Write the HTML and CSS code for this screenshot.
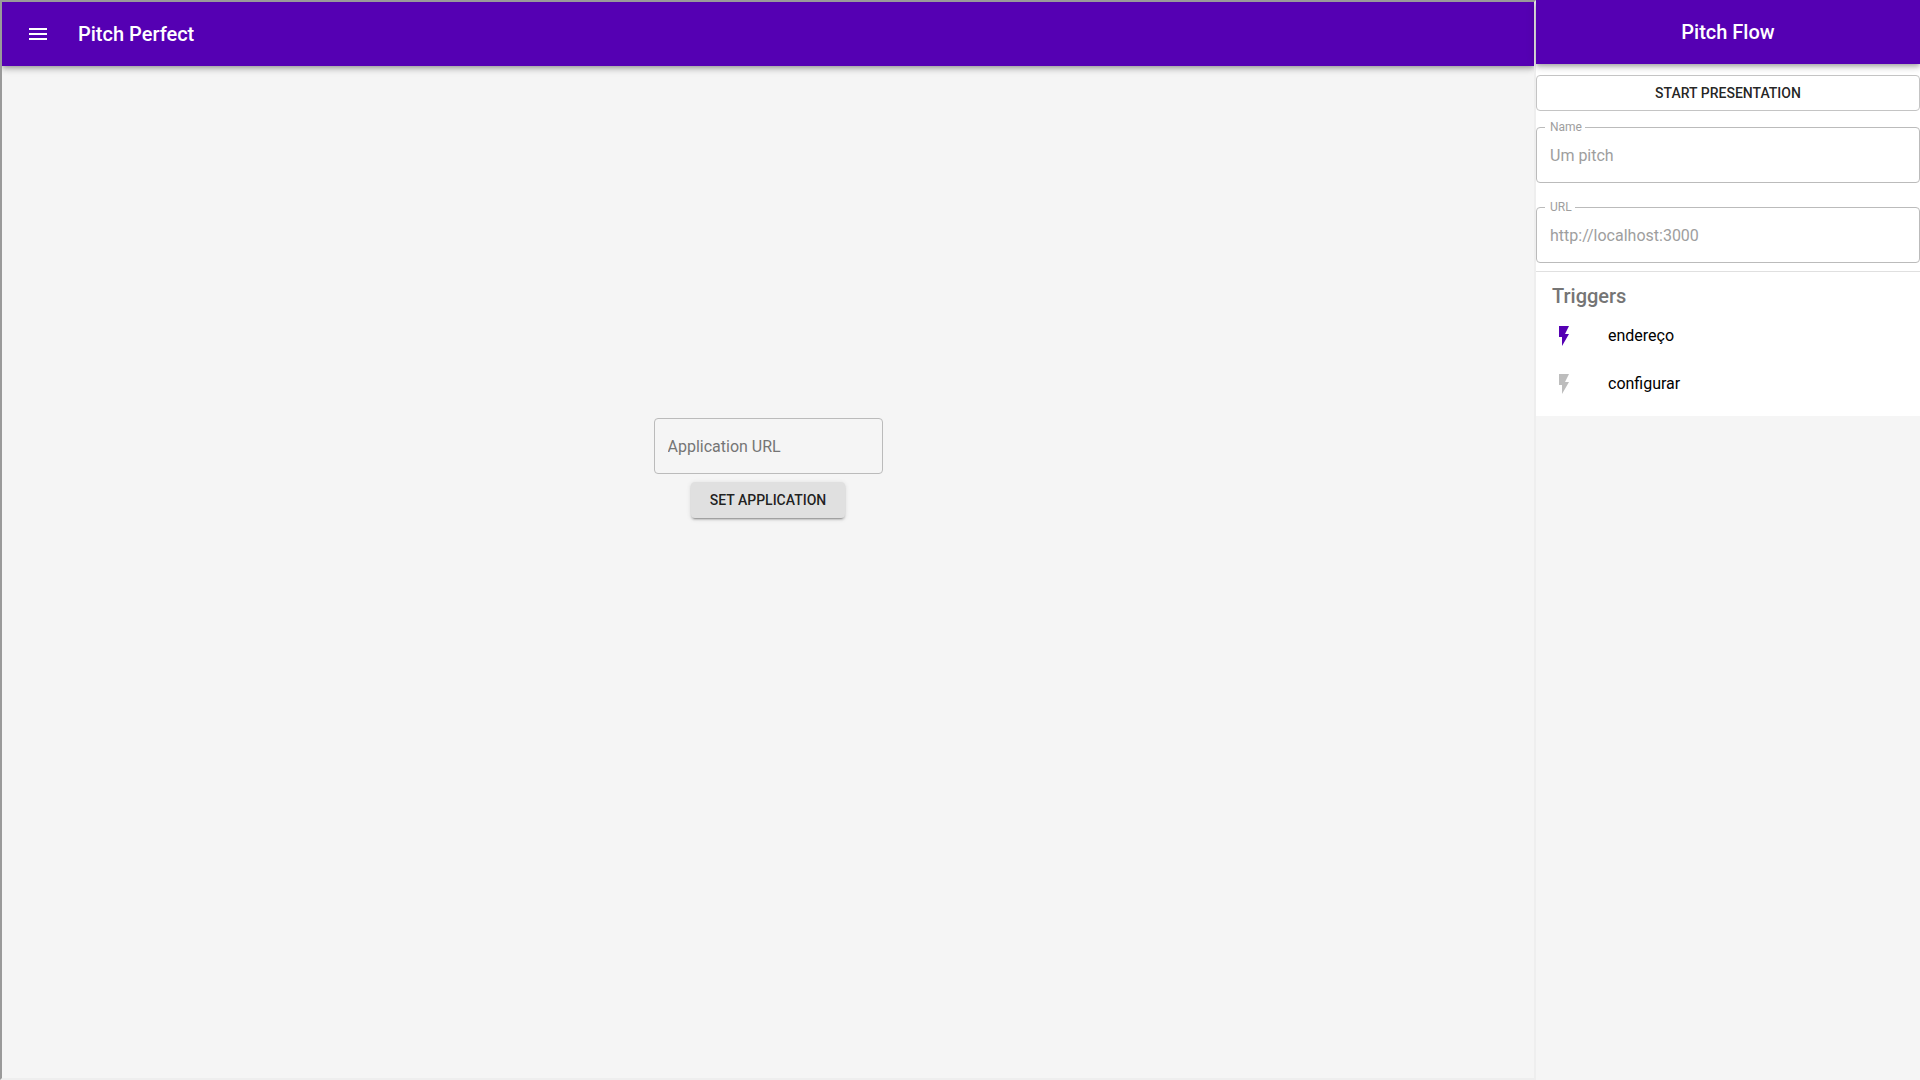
FILE: index.html
```html
<!DOCTYPE html>
<html lang="en">
<head>
  <meta charset="UTF-8" />
  <meta name="viewport" content="width=device-width, initial-scale=1.0"/>
  <title>Pitch Perfect</title>
  <link rel="stylesheet" href="styles.css">
</head>
<body>

  <main class="stage">
    <header class="app-bar">
      <button class="menu-btn" type="button" aria-label="Open menu">
        <svg viewBox="0 0 24 24" width="24" height="24"><path d="M3 18h18v-2H3v2zm0-5h18v-2H3v2zm0-7v2h18V6H3z"/></svg>
      </button>
      <h1>Pitch Perfect</h1>
    </header>

    <form class="app-form">
      <input class="text-input" type="text" placeholder="Application URL" aria-label="Application URL">
      <button class="btn btn-contained" type="button">Set Application</button>
    </form>
  </main>

  <aside class="sidebar">
    <header class="app-bar app-bar-center">
      <h2>Pitch Flow</h2>
    </header>

    <div class="panel">
      <div class="flow-form">
        <button class="btn btn-outlined" type="button">Start Presentation</button>
        <div class="field">
          <label for="pitchName">Name</label>
          <input class="text-input" id="pitchName" type="text" value="Um pitch" disabled>
        </div>
        <div class="field">
          <label for="pitchUrl">URL</label>
          <input class="text-input" id="pitchUrl" type="text" value="http://localhost:3000" disabled>
        </div>
      </div>

      <section class="triggers">
        <h3>Triggers</h3>
        <ul>
          <li>
            <svg class="bolt active" viewBox="0 0 24 24" width="24" height="24"><path d="M7 2v11h3v9l7-12h-4l4-8z"/></svg>
            <span>endereço</span>
          </li>
          <li>
            <svg class="bolt" viewBox="0 0 24 24" width="24" height="24"><path d="M7 2v11h3v9l7-12h-4l4-8z"/></svg>
            <span>configurar</span>
          </li>
        </ul>
      </section>
    </div>
  </aside>

</body>
</html>
```

FILE: styles.css
```css
* {
  box-sizing: border-box;
}

body {
  margin: 0;
  min-height: 100vh;
  display: grid;
  grid-template-columns: 4fr 1fr;
  background: #f5f5f5;
  font-family: Roboto, sans-serif;
  font-size: 16px;
  line-height: 24px;
  color: #000;
}

h1, h2, h3 {
  margin: 0;
  font-size: 20px;
  font-weight: 500;
  line-height: 32px;
}

/* Main area */
.stage {
  border: 2px solid;
  border-color: #9a9a9a #eee #eee #9a9a9a;
  overflow: hidden;
}

.app-bar {
  display: flex;
  align-items: center;
  height: 64px;
  padding: 0 24px;
  background: #5500b3;
  color: #fff;
  box-shadow: 0 2px 4px -1px rgba(0, 0, 0, 0.2), 0 4px 5px 0 rgba(0, 0, 0, 0.14), 0 1px 10px 0 rgba(0, 0, 0, 0.12);
}

.app-bar-center {
  justify-content: center;
  position: relative;
}

.menu-btn {
  display: flex;
  padding: 12px;
  margin: 0 16px 0 -12px;
  border: none;
  border-radius: 50%;
  background: none;
  cursor: pointer;
}

.menu-btn svg {
  fill: #fff;
}

.app-form {
  display: flex;
  flex-direction: column;
  align-items: center;
  gap: 8px;
  padding-top: 352px;
}

.app-form .text-input {
  width: 229px;
}

/* Controls */
.text-input {
  width: 100%;
  height: 56px;
  padding: 0 13px;
  border: 1px solid #bbb;
  border-radius: 4px;
  background: transparent;
  font: inherit;
}

.text-input::placeholder {
  color: #757575;
  opacity: 1;
}

.text-input:disabled {
  color: #9e9e9e;
}

.btn {
  height: 36px;
  padding: 0 19px;
  border: none;
  border-radius: 4px;
  color: rgba(0, 0, 0, 0.87);
  font-family: inherit;
  font-size: 14px;
  font-weight: 500;
  text-transform: uppercase;
  cursor: pointer;
}

.btn-contained {
  background: #e0e0e0;
  box-shadow: 0 3px 1px -2px rgba(0, 0, 0, 0.2), 0 2px 2px 0 rgba(0, 0, 0, 0.14), 0 1px 5px 0 rgba(0, 0, 0, 0.12);
}

.btn-outlined {
  border: 1px solid #c4c4c4;
  background: transparent;
}

/* Sidebar */
.panel {
  background: #fff;
}

.flow-form {
  display: flex;
  flex-direction: column;
  padding: 11px 0 8px;
  border-bottom: 1px solid #e0e0e0;
}

.field {
  position: relative;
  display: flex;
  margin-top: 16px;
}

.field + .field {
  margin-top: 24px;
}

/* label sits over the top border of the input */
.field label {
  position: absolute;
  top: -8px;
  left: 9px;
  padding: 0 3px 0 5px;
  background: #fff;
  color: #9e9e9e;
  font-size: 12px;
  line-height: 16px;
}

.triggers {
  padding: 8px 0;
}

.triggers h3 {
  padding: 0 16px;
  color: #757575;
}

.triggers ul {
  margin: 0;
  padding: 0;
  list-style: none;
}

.triggers li {
  display: flex;
  align-items: center;
  gap: 32px;
  height: 48px;
  padding: 0 16px;
}

.bolt {
  fill: #bdbdbd;
}

.bolt.active {
  fill: #5500b3;
}
```
